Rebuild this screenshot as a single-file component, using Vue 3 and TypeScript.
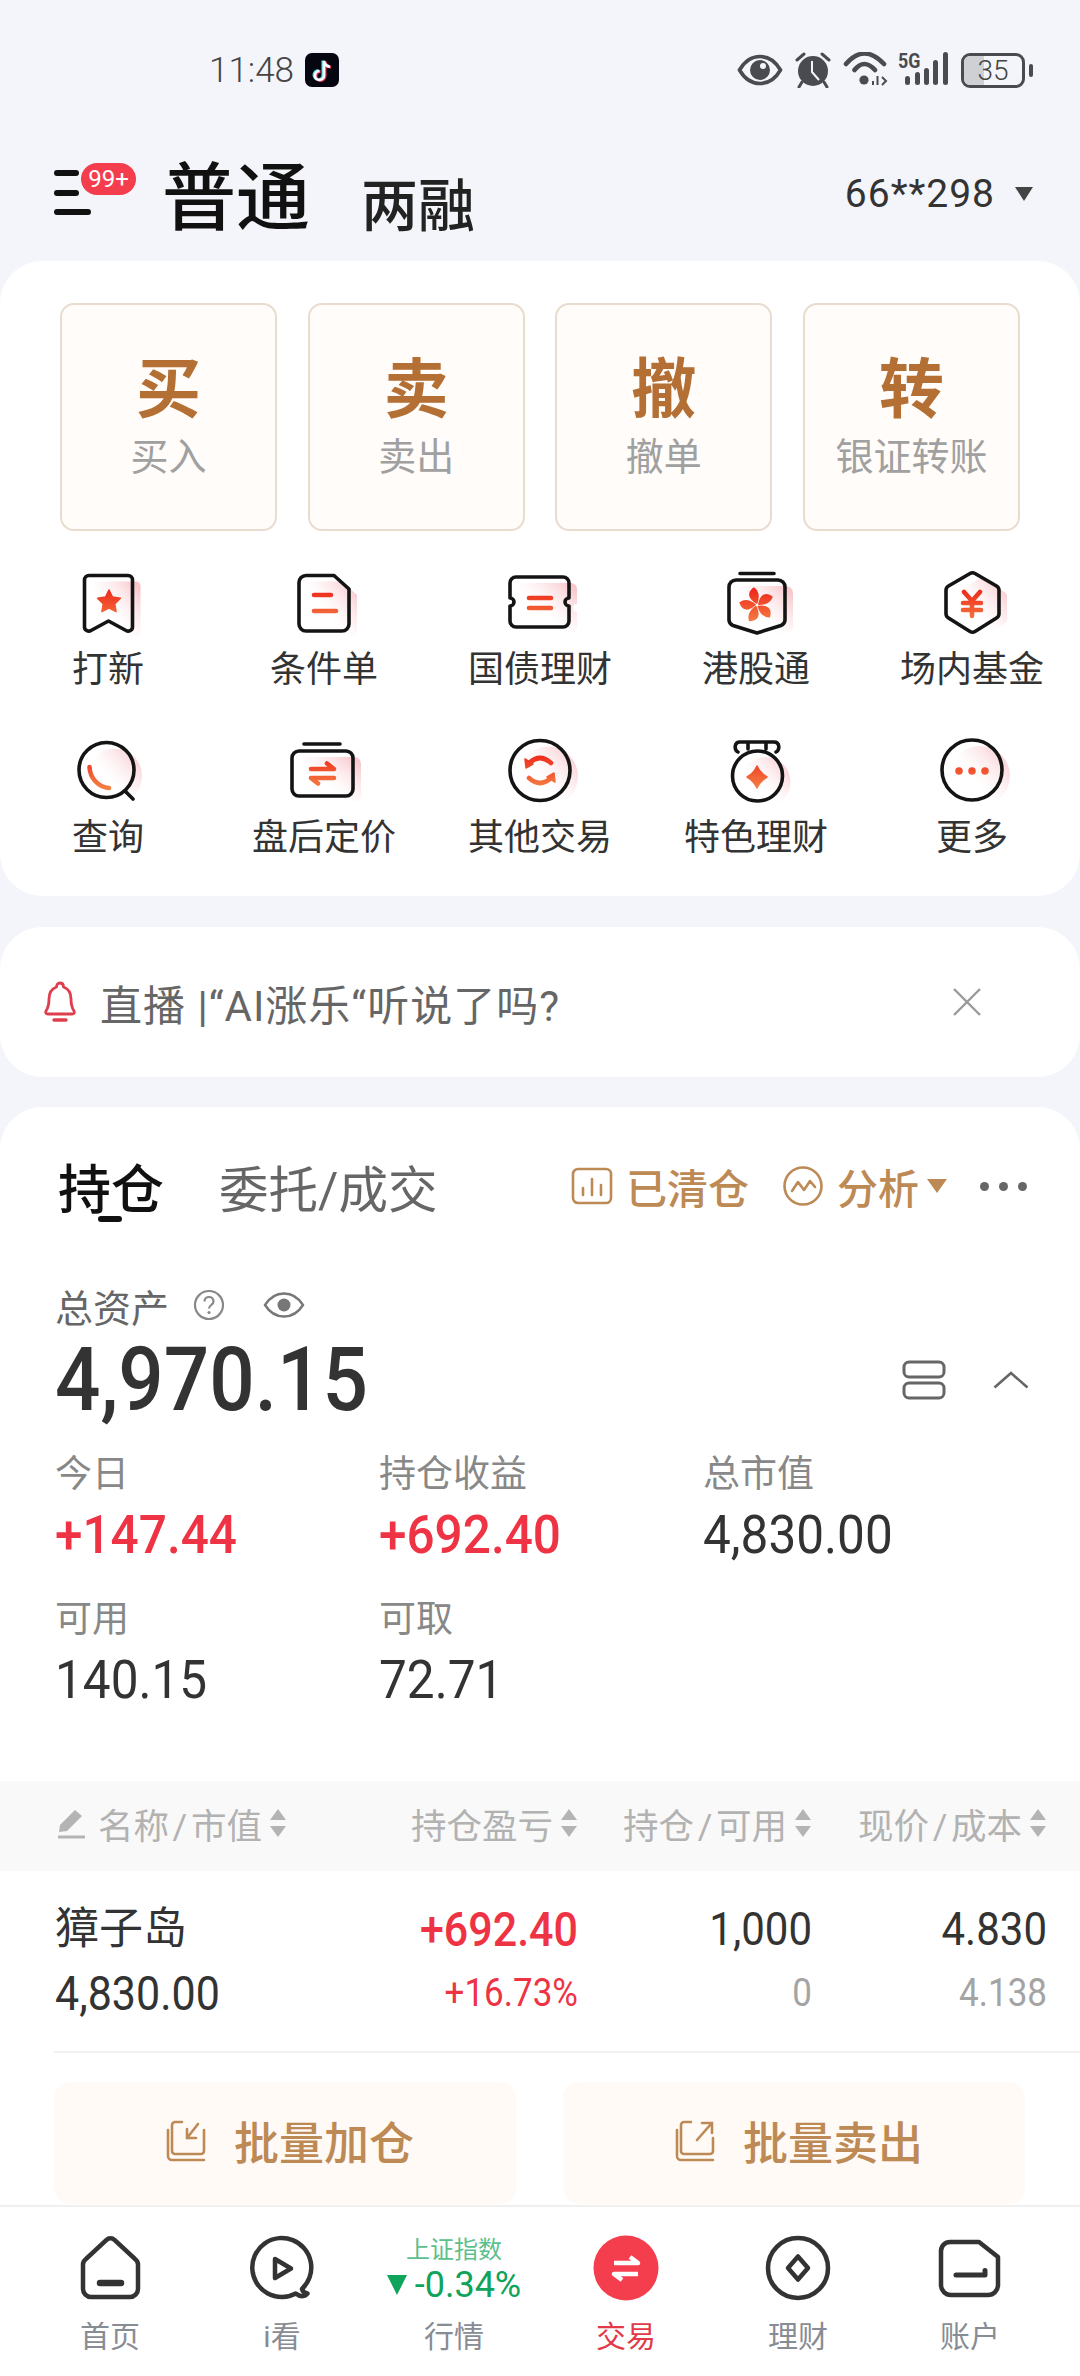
<template>
  <div class="page">
    <!-- shared gradients for the tool icons -->
    <svg class="defs" width="0" height="0">
      <defs>
        <linearGradient id="accent" gradientUnits="userSpaceOnUse" x1="0" y1="20" x2="0" y2="54">
          <stop offset="0" stop-color="#ee2a1c" />
          <stop offset="1" stop-color="#f58245" />
        </linearGradient>
        <linearGradient id="pink" x1="1" y1="0.15" x2="0.45" y2="0.65">
          <stop offset="0" stop-color="#f8c6cb" />
          <stop offset="1" stop-color="#fdeef0" stop-opacity="0" />
        </linearGradient>
      </defs>
    </svg>

    <div class="status">
      <div class="status-left">
        <span class="time">11:48</span>
        <svg class="tiktok" width="34" height="34" viewBox="0 0 34 34">
          <rect width="34" height="34" rx="7" fill="#05060f" />
          <path d="M19 8V22.5a4.5 4.5 0 1 1-4.5-4.5M19 8c.6 3.4 2.6 5.4 6 5.8" fill="none" stroke="#4fe3e6" stroke-width="3" transform="translate(-1 -.5)" />
          <path d="M19 8V22.5a4.5 4.5 0 1 1-4.5-4.5M19 8c.6 3.4 2.6 5.4 6 5.8" fill="none" stroke="#f0355a" stroke-width="3" transform="translate(1 .5)" />
          <path d="M19 8V22.5a4.5 4.5 0 1 1-4.5-4.5M19 8c.6 3.4 2.6 5.4 6 5.8" fill="none" stroke="#fff" stroke-width="2.6" />
        </svg>
      </div>
      <div class="status-right">
        <svg width="46" height="32" viewBox="0 0 46 32">
          <path d="M2.5 16C8 6.5 15 2.5 23 2.5S38 6.5 43.5 16C38 25.5 31 29.5 23 29.5S8 25.5 2.5 16Z" fill="none" stroke="#4a4b50" stroke-width="3.6" />
          <circle cx="23" cy="16" r="10" fill="#4a4b50" />
          <circle cx="26" cy="12" r="3" fill="#f3f5fa" />
        </svg>
        <svg width="36" height="36" viewBox="0 0 36 36">
          <path d="M2 8L9 2M34 8L27 2M7 30L4 35M29 30L32 35" stroke="#4a4b50" stroke-width="3" stroke-linecap="round" />
          <circle cx="18" cy="19" r="15" fill="#4a4b50" />
          <path d="M17 9V20L24 28" fill="none" stroke="#f3f5fa" stroke-width="2" />
        </svg>
        <svg width="46" height="36" viewBox="0 0 46 36">
          <path d="M3 12Q21 -9 41 12M11.500 18Q21 6 32 18" fill="none" stroke="#4a4b50" stroke-width="4.600" stroke-linecap="round" />
          <circle cx="21" cy="28" r="4.600" fill="#4a4b50" />
          <path d="M30 33V29M34.500 33V24M39 25L43 29L39 33" fill="none" stroke="#4a4b50" stroke-width="2" />
        </svg>
        <div class="signal">
          <span class="five-g">5G</span>
          <svg width="44" height="36" viewBox="0 0 44 36">
            <rect x="1" y="24" width="5" height="9" rx="2.500" fill="#4a4b50" />
            <rect x="11" y="20" width="5" height="13" rx="2.500" fill="#4a4b50" />
            <rect x="20" y="16" width="5" height="17" rx="2.500" fill="#4a4b50" />
            <rect x="29" y="8" width="5" height="25" rx="2.500" fill="#4a4b50" />
            <rect x="39" y="0" width="5" height="33" rx="2.500" fill="#4a4b50" />
          </svg>
        </div>
        <div class="battery">
          <div class="battery-box">
            <div class="battery-fill" :style="{ width: batteryLevel + '%' }"></div>
            <span class="battery-text">{{ batteryLevel }}</span>
          </div>
          <div class="battery-nub"></div>
        </div>
      </div>
    </div>

    <div class="header">
      <div class="menu">
        <i class="menu-bar"></i>
        <i class="menu-bar"></i>
        <i class="menu-bar long"></i>
        <span class="badge">99+</span>
      </div>
      <span class="mode">普通</span>
      <span class="mode-sub">两融</span>
      <span class="account">66**298</span>
      <i class="account-arrow"></i>
    </div>

    <div class="content">
      <div class="card main-card">
        <div class="trade-row">
          <div v-for="t in tradeBtns" :key="t.big" class="trade-btn">
            <div class="trade-big">{{ t.big }}</div>
            <div class="trade-sub">{{ t.sub }}</div>
          </div>
        </div>
        <div class="tools">
          <div v-for="tool in tools" :key="tool.label" class="tool">
            <svg width="80" height="70" viewBox="0 0 80 70">
              <path :d="tool.shade" fill="url(#pink)" transform="translate(8 6)" />
              <path :d="tool.line" fill="none" stroke="#141414" stroke-width="3.6" stroke-linecap="round" stroke-linejoin="round" />
              <path v-if="tool.fill" :d="tool.fill" fill="url(#accent)" stroke="url(#accent)" stroke-width="1.5" stroke-linejoin="round" />
              <path v-if="tool.stroke" :d="tool.stroke" fill="none" stroke="url(#accent)" stroke-width="4.6" stroke-linecap="round" stroke-linejoin="round" />
            </svg>
            <div class="tool-label">{{ tool.label }}</div>
          </div>
        </div>
      </div>

      <div class="card notice">
        <svg width="34" height="42" viewBox="0 0 34 42">
          <path d="M17 2c2.500 0 3.500 2 3.500 4C26 8 28 13 28 18c0 6 1 9 3 12 1 2 0 3-2 3H5c-2 0-3-1-2-3 2-3 3-6 3-12 0-5 2-10 7.500-12C13.500 4 14.500 2 17 2Z" fill="none" stroke="#df3f4d" stroke-width="2.8" stroke-linejoin="round" />
          <path d="M11 39H23" stroke="#df3f4d" stroke-width="3.4" stroke-linecap="round" />
        </svg>
        <span class="notice-text">直播 |“AI涨乐“听说了吗?</span>
        <svg class="notice-close" width="30" height="30" viewBox="0 0 30 30">
          <path d="M2 2L28 28M28 2L2 28" stroke="#999" stroke-width="2.4" />
        </svg>
      </div>

      <div class="card holdings">
        <div class="tabs">
          <div class="tab active">持仓<i class="tab-mark"></i></div>
          <div class="tab">委托/成交</div>
          <div class="tab-actions">
            <svg width="42" height="38" viewBox="0 0 42 38">
              <rect x="2" y="2" width="38" height="34" rx="5" fill="none" stroke="#bd8a55" stroke-width="2.6" />
              <path d="M12 21V28M21 12V28M30 18V28" stroke="#bd8a55" stroke-width="2.6" stroke-linecap="round" />
            </svg>
            <span class="action-text">已清仓</span>
            <svg class="action-gap" width="42" height="42" viewBox="0 0 42 42">
              <circle cx="21" cy="21" r="18.500" fill="none" stroke="#bd8a55" stroke-width="2.6" />
              <path d="M10 26L16 17L22 25L28 16L33 22" fill="none" stroke="#bd8a55" stroke-width="2.6" stroke-linejoin="round" stroke-linecap="round" />
            </svg>
            <span class="action-text">分析</span>
            <i class="action-arrow"></i>
            <div class="dots"><i></i><i></i><i></i></div>
          </div>
        </div>

        <div class="asset-title">
          <span>总资产</span>
          <svg class="help" width="32" height="32" viewBox="0 0 32 32">
            <circle cx="16" cy="16" r="14" fill="none" stroke="#888" stroke-width="2.2" />
            <path d="M11.500 12.500c0-6 9-6 9 0 0 3.500-4.500 3.500-4.500 7" fill="none" stroke="#888" stroke-width="2.2" />
            <circle cx="16" cy="23.500" r="1.600" fill="#888" />
          </svg>
          <svg class="eye" width="42" height="28" viewBox="0 0 42 28">
            <path d="M2 14C7 6 13 2.500 21 2.500S35 6 40 14C35 22 29 25.500 21 25.500S7 22 2 14Z" fill="none" stroke="#777" stroke-width="2.400" />
            <circle cx="21" cy="14" r="6.500" fill="#777" />
          </svg>
        </div>
        <div class="asset-row">
          <span class="asset-value">4,970.15</span>
          <svg width="44" height="40" viewBox="0 0 44 40">
            <rect x="2" y="2" width="40" height="15" rx="5" fill="none" stroke="#666" stroke-width="3" />
            <rect x="2" y="23" width="40" height="15" rx="5" fill="none" stroke="#666" stroke-width="3" />
          </svg>
          <svg class="chevron" width="36" height="18" viewBox="0 0 36 18">
            <path d="M1.500 16.500L18 2L34.500 16.500" fill="none" stroke="#666" stroke-width="2.600" />
          </svg>
        </div>

        <div class="metrics">
          <div v-for="m in metrics" :key="m.label" class="metric">
            <div class="metric-label">{{ m.label }}</div>
            <div class="metric-value" :class="{ up: m.up }">{{ m.value }}</div>
          </div>
        </div>

        <div class="table-head grid-cols">
          <div class="head-cell first">
            <svg class="pencil" width="30" height="32" viewBox="0 0 30 32">
              <path d="M18 3L25 9L10 24L2 25L3 18Z" fill="#b4b4b4" />
              <path d="M1 30H28" stroke="#b4b4b4" stroke-width="3" />
            </svg>
            名称&#8202;/&#8202;市值
            <svg class="sort" width="18" height="32" viewBox="0 0 18 32"><path d="M9 2L17 13H1ZM9 30L1 19H17Z" fill="#b4b4b4" /></svg>
          </div>
          <div class="head-cell">
            持仓盈亏
            <svg class="sort" width="18" height="32" viewBox="0 0 18 32"><path d="M9 2L17 13H1ZM9 30L1 19H17Z" fill="#b4b4b4" /></svg>
          </div>
          <div class="head-cell">
            持仓&#8202;/&#8202;可用
            <svg class="sort" width="18" height="32" viewBox="0 0 18 32"><path d="M9 2L17 13H1ZM9 30L1 19H17Z" fill="#b4b4b4" /></svg>
          </div>
          <div class="head-cell">
            现价&#8202;/&#8202;成本
            <svg class="sort" width="18" height="32" viewBox="0 0 18 32"><path d="M9 2L17 13H1ZM9 30L1 19H17Z" fill="#b4b4b4" /></svg>
          </div>
        </div>

        <div class="stock grid-cols">
          <div class="stock-name">獐子岛</div>
          <div class="num big up strong">+692.40</div>
          <div class="num big">1,000</div>
          <div class="num big">4.830</div>
          <div class="stock-val">4,830.00</div>
          <div class="num small up">+16.73%</div>
          <div class="num small muted">0</div>
          <div class="num small muted">4.138</div>
        </div>
        <div class="divider"></div>

        <div class="bulk">
          <div class="bulk-btn">
            <svg width="44" height="44" viewBox="0 0 44 44">
              <path d="M16 4H9a3 3 0 0 0-3 3V33a3 3 0 0 0 3 3H35a3 3 0 0 0 3-3V12M2 12V38a4 4 0 0 0 4 4H38" fill="none" stroke="#bd8a55" stroke-width="2.6" stroke-linecap="round" />
              <path d="M32 6L21 20M21 11V20H30" fill="none" stroke="#bd8a55" stroke-width="2.6" stroke-linecap="round" />
            </svg>
            <span>批量加仓</span>
          </div>
          <div class="bulk-btn">
            <svg width="44" height="44" viewBox="0 0 44 44">
              <path d="M16 4H9a3 3 0 0 0-3 3V33a3 3 0 0 0 3 3H35a3 3 0 0 0 3-3V20M2 12V38a4 4 0 0 0 4 4H38" fill="none" stroke="#bd8a55" stroke-width="2.6" stroke-linecap="round" />
              <path d="M22 22L36 6M27 5H37V15" fill="none" stroke="#bd8a55" stroke-width="2.6" stroke-linecap="round" />
            </svg>
            <span>批量卖出</span>
          </div>
        </div>
      </div>
    </div>

    <div class="nav">
      <div class="nav-item">
        <svg width="80" height="68" viewBox="0 0 80 68">
          <path d="M36.500 5a5.500 5.500 0 0 1 8 0L65 24a7 7 0 0 1 3 6V54a8 8 0 0 1-8 8H21a8 8 0 0 1-8-8V30a7 7 0 0 1 3-6Z" fill="none" stroke="#333" stroke-width="4.500" />
          <path d="M30 48H51" stroke="#333" stroke-width="6.500" stroke-linecap="round" />
        </svg>
        <span>首页</span>
      </div>
      <div class="nav-item">
        <svg width="80" height="68" viewBox="0 0 80 68">
          <path d="M60 54C60.500 56.500 62.500 58 65.500 58.500C63 62 58 62 53.750 58.500A29.500 29.500 0 1 1 60 54Z" fill="none" stroke="#333" stroke-width="4.500" stroke-linejoin="round" />
          <path d="M33 24L49 33.500L33 43Z" fill="none" stroke="#333" stroke-width="4.500" stroke-linejoin="round" />
        </svg>
        <span>i看</span>
      </div>
      <div class="nav-item">
        <div class="index">
          <div class="index-name">上证指数</div>
          <div class="index-value"><i class="index-arrow"></i>-0.34%</div>
        </div>
        <span>行情</span>
      </div>
      <div class="nav-item on">
        <svg width="80" height="68" viewBox="0 0 80 68">
          <circle cx="40" cy="33" r="32.500" fill="#f43e4d" />
          <path d="M28 28H52L44 22M52 39H28L36 45" fill="none" stroke="#fff" stroke-width="4.500" stroke-linejoin="round" />
        </svg>
        <span>交易</span>
      </div>
      <div class="nav-item">
        <svg width="80" height="68" viewBox="0 0 80 68">
          <circle cx="40" cy="33" r="30" fill="none" stroke="#333" stroke-width="4.500" />
          <path d="M40 21.500L50 33L40 44.500L30 33Z" fill="none" stroke="#333" stroke-width="4.500" stroke-linejoin="round" />
        </svg>
        <span>理财</span>
      </div>
      <div class="nav-item">
        <svg width="80" height="68" viewBox="0 0 80 68">
          <path d="M20 7H49L68 22V50a10 10 0 0 1-10 10H21a10 10 0 0 1-10-10V16a9 9 0 0 1 9-9Z" fill="none" stroke="#333" stroke-width="4.500" stroke-linejoin="round" />
          <path d="M26 40H55V35.500" fill="none" stroke="#333" stroke-width="5" stroke-linecap="round" stroke-linejoin="round" />
        </svg>
        <span>账户</span>
      </div>
    </div>
  </div>
</template>

<script setup lang="ts">
const batteryLevel = 35

const circle = (cx: number, cy: number, r: number) =>
  `M${cx - r} ${cy}a${r} ${r} 0 1 1 ${r * 2} 0a${r} ${r} 0 1 1 ${-r * 2} 0Z`

// five curved petals for the bauhinia icon
const petals = (cx: number, cy: number, r: number) => {
  let d = ''
  for (let i = 0; i < 5; i++) {
    const a = ((-95 + i * 72) * Math.PI) / 180
    const pt = (along: number, side: number) => {
      const x = cx + along * Math.cos(a) - side * Math.sin(a)
      const y = cy + along * Math.sin(a) + side * Math.cos(a)
      return `${x.toFixed(1)} ${y.toFixed(1)}`
    }
    d += `M${pt(2, 0)}Q${pt(r * 0.6, -r * 0.68)} ${pt(r, -r * 0.1)}Q${pt(r * 0.7, r * 0.25)} ${pt(2, 0)}Z`
  }
  return d
}

const tradeBtns = [
  { big: '买', sub: '买入' },
  { big: '卖', sub: '卖出' },
  { big: '撤', sub: '撤单' },
  { big: '转', sub: '银证转账' }
]

const bookmark = 'M21 5.500H60a4.500 4.500 0 0 1 4.500 4.500V57c0 3.500-4 5-6.500 3.500L40.500 51 23 60.500c-2.500 1.500-6.500 0-6.500-3.500V10a4.500 4.500 0 0 1 4.500-4.500Z'
const doc = 'M22 5.500H50L65 19V54a7 7 0 0 1-7 7H22a7 7 0 0 1-7-7V12.500a7 7 0 0 1 7-7Z'
const ticket = 'M16 7H63a6 6 0 0 1 6 6V28a4 4 0 0 0 0 8V51a6 6 0 0 1-6 6H16a6 6 0 0 1-6-6V36a4 4 0 0 0 0-8V13a6 6 0 0 1 6-6Z'
const hkBody = 'M20 10H62a7 7 0 0 1 7 7V50a6 6 0 0 1-4 5.500L41 63 17 55.500a6 6 0 0 1-4-5.500V17a7 7 0 0 1 7-7Z'
const hex = 'M38 3.500a5 5 0 0 1 5 0L64.500 16a5 5 0 0 1 2.500 4V44a5 5 0 0 1-2.500 4L43 61.500a5 5 0 0 1-5 0L16.500 48a5 5 0 0 1-2.500-4V20a5 5 0 0 1 2.500-4Z'
const orderBody = 'M15 16H62a7 7 0 0 1 7 7V54a7 7 0 0 1-7 7H15a7 7 0 0 1-7-7V23a7 7 0 0 1 7-7Z'

const tools = [
  {
    label: '打新',
    shade: bookmark,
    line: bookmark,
    fill: 'M41 20L44.500 27.100L52.400 28.300L46.700 33.900L48.100 41.700L41 38L33.900 41.700L35.300 33.900L29.600 28.300L37.500 27.100Z'
  },
  { label: '条件单', shade: doc, line: doc, stroke: 'M30 25H47M30 41H52' },
  { label: '国债理财', shade: ticket, line: ticket, stroke: 'M29 28H51M29 38H51' },
  { label: '港股通', shade: hkBody, line: hkBody + 'M24 3.500H58', fill: petals(41, 35, 17) },
  { label: '场内基金', shade: hex, line: hex, stroke: 'M32 22L40 31L48 22M31 33H49M31 40H49M40 31V46' },
  {
    label: '查询',
    shade: circle(38.5, 35, 27.5),
    line: circle(38.5, 35, 27.5) + 'M58 57L65 64',
    stroke: 'M21.500 32C22 43 30 52 41 53'
  },
  { label: '盘后定价', shade: orderBody, line: orderBody + 'M20 9H56', stroke: 'M27 34H50L43 28.500M50 43H27L34 48.500' },
  {
    label: '其他交易',
    shade: circle(40, 35.5, 30),
    line: circle(40, 35.5, 30),
    stroke: 'M29 28Q40 18 51 28M29 43Q40 53 51 43',
    fill: 'M25 24L33 29L26 33ZM55 47L47 42L54 38Z'
  },
  {
    label: '特色理财',
    shade: circle(41.5, 41, 25),
    line: circle(41.5, 41, 25) + 'M22 17C18 15 18 7 24 7H58C64 7 64 15 60 17M32 7V14M50 7V14',
    fill: 'M41 31Q44 38 51 42Q44 46 41 53Q38 46 31 42Q38 38 41 31Z'
  },
  {
    label: '更多',
    shade: circle(40, 35, 30),
    line: circle(40, 35, 30),
    fill: circle(27, 36, 3) + circle(40, 36, 3) + circle(53, 36, 3)
  }
]

const metrics = [
  { label: '今日', value: '+147.44', up: true },
  { label: '持仓收益', value: '+692.40', up: true },
  { label: '总市值', value: '4,830.00', up: false },
  { label: '可用', value: '140.15', up: false },
  { label: '可取', value: '72.71', up: false }
]
</script>

<style>
html,
body {
  margin: 0;
  background: #f3f5fa;
}
</style>

<style scoped>
.page {
  position: relative;
  width: 1080px;
  height: 2376px;
  display: flex;
  flex-direction: column;
  overflow: hidden;
  background: #f3f5fa;
  font-family: Roboto, "Noto Sans CJK SC", sans-serif;
  color: #222;
}
.defs {
  position: absolute;
}
i {
  display: block;
}

.status {
  height: 140px;
  flex: none;
  display: flex;
  align-items: center;
  justify-content: space-between;
  padding: 0 47px 0 209px;
  box-sizing: border-box;
}
.status-left {
  display: flex;
  align-items: center;
  gap: 11px;
}
.time {
  font-size: 35px;
  font-weight: 300;
  color: #444;
}
.status-right {
  display: flex;
  align-items: center;
  gap: 12px;
  color: #4a4b50;
}
.signal {
  position: relative;
  width: 50px;
  height: 36px;
  margin-left: -3px;
}
.signal svg {
  display: block;
  margin-left: 6px;
}
.five-g {
  position: absolute;
  left: 0;
  top: -1px;
  font-size: 21px;
  font-weight: 700;
  line-height: 20px;
  transform: scaleX(0.85);
  transform-origin: left;
}
.battery {
  display: flex;
  align-items: center;
  gap: 4px;
  margin-left: 1px;
}
.battery-box {
  position: relative;
  width: 64px;
  height: 35px;
  box-sizing: border-box;
  border: 3px solid #4a4b50;
  border-radius: 9px;
  overflow: hidden;
  display: flex;
  align-items: center;
  justify-content: center;
}
.battery-fill {
  position: absolute;
  left: 0;
  top: 0;
  bottom: 0;
  background: #cfd0d4;
}
.battery-text {
  position: relative;
  font-size: 28px;
  font-weight: 300;
  color: #444;
}
.battery-nub {
  width: 4px;
  height: 13px;
  border-radius: 2px;
  background: #4a4b50;
}

.header {
  height: 121px;
  flex: none;
  display: flex;
  align-items: center;
  padding: 0 47px 0 54px;
  box-sizing: border-box;
}
.menu {
  position: relative;
  width: 108px;
  height: 45px;
  display: flex;
  flex-direction: column;
  justify-content: space-between;
  margin-top: -16px;
}
.menu-bar {
  width: 25px;
  height: 6px;
  border-radius: 3px;
  background: #111;
}
.menu-bar.long {
  width: 37px;
}
.badge {
  position: absolute;
  left: 27px;
  top: -7px;
  width: 55px;
  height: 32px;
  border-radius: 16px;
  background: #f43e4d;
  color: #fff;
  font-size: 24px;
  line-height: 32px;
  text-align: center;
}
.mode {
  font-size: 74px;
  font-weight: 500;
  line-height: 80px;
  color: #111;
  margin-top: -4px;
}
.mode-sub {
  font-size: 57px;
  font-weight: 500;
  line-height: 60px;
  color: #222;
  margin-left: 51px;
  margin-top: 12px;
}
.account {
  margin-left: auto;
  margin-top: -14px;
  font-size: 39px;
  color: #333;
  letter-spacing: 1px;
}
.account-arrow {
  margin-left: 20px;
  margin-top: -14px;
  width: 0;
  height: 0;
  border-left: 9px solid transparent;
  border-right: 9px solid transparent;
  border-top: 14px solid #444;
}

.content {
  flex: 1;
  min-height: 0;
  overflow: hidden;
}
.card {
  background: #fff;
  border-radius: 42px;
}
.main-card {
  height: 635px;
  box-sizing: border-box;
  padding-top: 42px;
}
.trade-row {
  display: flex;
  justify-content: space-between;
  padding: 0 60px;
}
.trade-btn {
  width: 217px;
  height: 228px;
  box-sizing: border-box;
  background: #fffcf9;
  border: 2px solid #e8dccf;
  border-radius: 14px;
  text-align: center;
  padding-top: 47px;
}
.trade-big {
  font-size: 65px;
  font-weight: 700;
  line-height: 76px;
  color: #b36f34;
}
.trade-sub {
  font-size: 38px;
  line-height: 50px;
  color: #a0a0a0;
  margin-top: 4px;
}
.tools {
  display: grid;
  grid-template-columns: repeat(5, 216px);
  row-gap: 44px;
  margin-top: 39px;
}
.tool {
  display: flex;
  flex-direction: column;
  align-items: center;
}
.tool svg {
  display: block;
}
.tool-label {
  margin-top: 9px;
  font-size: 36px;
  line-height: 42px;
  color: #333;
}
.tool:nth-child(n + 6) .tool-label {
  margin-top: 12px;
}

.notice {
  margin-top: 31px;
  height: 150px;
  display: flex;
  align-items: center;
  padding: 0 98px 0 43px;
  box-sizing: border-box;
}
.notice-text {
  margin-left: 23px;
  font-size: 42px;
  letter-spacing: 1px;
  color: #666;
}
.notice-close {
  margin-left: auto;
}

.holdings {
  margin-top: 30px;
  border-radius: 42px 42px 0 0;
  height: 1098px;
}
.tabs {
  height: 162px;
  display: flex;
  align-items: center;
  padding: 0 53px 4px 58px;
  box-sizing: border-box;
}
.tab {
  position: relative;
  font-size: 49.500px;
  color: #666;
  margin-right: 55px;
}
.tab.active {
  font-size: 53px;
  font-weight: 500;
  color: #111;
}
.tab-mark {
  position: absolute;
  left: 40px;
  bottom: 2px;
  width: 24px;
  height: 6px;
  border-radius: 3px;
  background: #111;
}
.tab-actions {
  margin-left: auto;
  display: flex;
  align-items: center;
}
.action-text {
  margin-left: 13px;
  font-size: 41px;
  font-weight: 500;
  color: #bd8a55;
}
.action-gap {
  margin-left: 33px;
}
.action-arrow {
  margin-left: 8px;
  width: 0;
  height: 0;
  border-left: 10px solid transparent;
  border-right: 10px solid transparent;
  border-top: 14px solid #bd8a55;
}
.dots {
  display: flex;
  gap: 10px;
  margin-left: 33px;
}
.dots i {
  width: 9px;
  height: 9px;
  border-radius: 50%;
  background: #666;
}

.asset-title {
  margin-top: 11px;
  height: 50px;
  padding-left: 55px;
  display: flex;
  align-items: center;
  font-size: 38px;
  color: #666;
}
.help {
  margin-left: 24px;
}
.eye {
  margin-left: 38px;
}
.asset-row {
  margin-top: 10px;
  height: 80px;
  padding: 0 51px 0 55px;
  display: flex;
  align-items: center;
}
.asset-value {
  font-size: 80px;
  font-weight: 500;
  line-height: 80px;
  color: #333;
  margin-right: auto;
  transform: scaleY(1.12);
}
.chevron {
  margin-left: 47px;
}
.metrics {
  margin-top: 30px;
  padding-left: 55px;
  display: grid;
  grid-template-columns: repeat(3, 324px);
  row-gap: 31px;
}
.metric-label {
  font-size: 37px;
  line-height: 50px;
  color: #888;
}
.metric-value {
  margin-top: 4px;
  font-size: 49.500px;
  line-height: 60px;
  color: #333;
  transform: scaleY(1.1);
}
.metric-value.up {
  font-weight: 500;
  color: #ee3344;
}

.grid-cols {
  display: grid;
  grid-template-columns: 1fr 234px 234px 235px;
  padding: 0 33px 0 55px;
}
.table-head {
  margin-top: 72px;
  height: 90px;
  box-sizing: border-box;
  padding-bottom: 6px;
  align-items: center;
  background: #f9f9f9;
}
.head-cell {
  display: flex;
  align-items: center;
  justify-content: flex-end;
  font-size: 35.500px;
  color: #b2b2b2;
}
.head-cell.first {
  justify-content: flex-start;
}
.pencil {
  margin: 0 11px 0 2px;
}
.sort {
  margin-left: 7px;
}
.stock {
  padding-top: 30px;
  padding-bottom: 28px;
  row-gap: 6px;
  align-items: center;
}
.stock-name {
  font-size: 44px;
  line-height: 56px;
  color: #333;
}
.stock-val {
  font-size: 43px;
  line-height: 60px;
  color: #333;
  transform: scaleY(1.1);
}
.num {
  text-align: right;
  color: #333;
  transform: scaleY(1.1);
}
.num.big {
  font-size: 42px;
}
.num.small {
  font-size: 35px;
}
.num.up {
  color: #ee3344;
}
.num.strong {
  font-weight: 500;
  font-size: 43px;
}
.num.muted {
  color: #a4a4a4;
}
.divider {
  height: 2px;
  margin-left: 54px;
  background: #f2f2f2;
}
.bulk {
  margin-top: 29px;
  padding-left: 54px;
  display: flex;
  gap: 47px;
}
.bulk-btn {
  width: 462px;
  height: 122px;
  box-sizing: border-box;
  padding: 0 0 6px 10px;
  border-radius: 16px;
  background: #fffaf6;
  display: flex;
  align-items: center;
  justify-content: center;
  gap: 24px;
  font-size: 45px;
  font-weight: 500;
  color: #bd8a55;
}

.nav {
  height: 171px;
  flex: none;
  box-sizing: border-box;
  border-top: 2px solid #f0f0f0;
  background: #fff;
  display: grid;
  grid-template-columns: repeat(6, 172px);
  padding: 28px 0 0 24px;
}
.nav-item {
  display: flex;
  flex-direction: column;
  align-items: center;
  font-size: 30px;
  line-height: 40px;
  color: #888c94;
}
.nav-item svg {
  display: block;
  margin-bottom: 14px;
}
.nav-item.on {
  color: #e23a47;
}
.index {
  height: 68px;
  margin-bottom: 14px;
  text-align: center;
  white-space: nowrap;
}
.index-name {
  font-size: 24px;
  line-height: 30px;
  color: #5cc08c;
}
.index-value {
  display: flex;
  align-items: center;
  font-size: 36px;
  line-height: 40px;
  color: #0fa35c;
}
.index-arrow {
  width: 0;
  height: 0;
  margin-right: 8px;
  border-left: 10px solid transparent;
  border-right: 10px solid transparent;
  border-top: 20px solid #0fa35c;
}
</style>
